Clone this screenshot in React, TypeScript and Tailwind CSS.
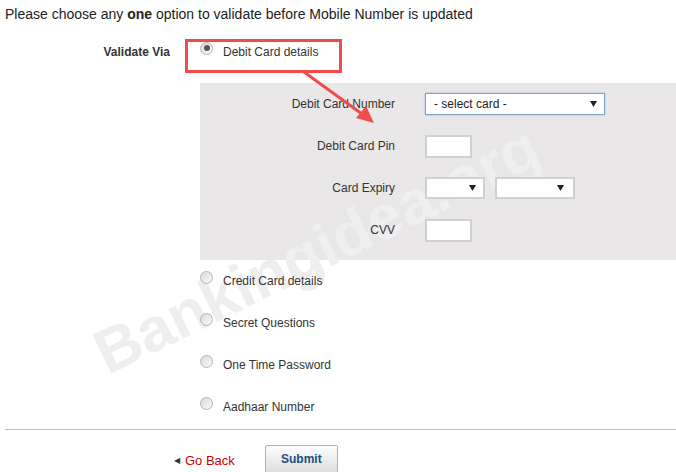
import React from "react";

const Radio = ({ checked = false }: { checked?: boolean }) => (
  <span className="mt-[-8px] flex h-[13px] w-[13px] shrink-0 items-center justify-center rounded-full border border-[#b3b3b3] bg-gradient-to-br from-[#d9d9d9] to-[#fbfbfb]">
    {checked && <span className="h-[6px] w-[6px] rounded-full bg-[#555]" />}
  </span>
);

const Option = ({ label, checked }: { label: string; checked?: boolean }) => (
  <div className="relative flex h-[42px] items-center">
    <Radio checked={checked} />
    <span className="ml-[10px]">{label}</span>
  </div>
);

const Caret = () => (
  <svg width="7" height="6" viewBox="0 0 7 6">
    <polygon points="0,0 7,0 3.5,6" fill="#222" />
  </svg>
);

const FieldRow = ({ label, children }: { label: string; children: React.ReactNode }) => (
  <div className="relative flex h-[42px] items-center">
    <div className="w-[195px] text-right">{label}</div>
    <div className="ml-[30px] flex items-center gap-[10px]">{children}</div>
  </div>
);

const Watermark = ({ className }: { className: string }) => (
  <div
    aria-hidden
    className={`pointer-events-none absolute origin-center -rotate-[26deg] whitespace-nowrap text-[62px] font-bold leading-none ${className}`}
  >
    Bankingidea.org
  </div>
);

export default function App() {
  return (
    <div className="relative h-[472px] w-[676px] overflow-hidden bg-white font-['Liberation_Sans',Arial,sans-serif] text-[12px] text-[#333]">
      <Watermark className="left-[74px] top-[219px] text-[#eeeeee]" />

      <div className="relative">
        {/* Header */}
        <p className="pl-[5px] pt-[6px] text-[14px] leading-[17px] text-[#222]">
          Please choose any <b>one</b> option to validate before Mobile Number is updated
        </p>

        {/* Validate via */}
        <div className="mt-[8px] flex">
          <div className="flex h-[42px] w-[170px] items-center justify-end font-bold">Validate Via</div>
          <div className="ml-[30px] flex-1">
            <Option label="Debit Card details" checked />

            <div className="relative mt-[10px] overflow-hidden bg-[#e9e7e8] pb-[9px]">
              <Watermark className="left-[-126px] top-[136px] text-[#f3f3f3] opacity-70" />
              <FieldRow label="Debit Card Number">
                <div className="flex h-[22px] w-[180px] items-center justify-between border border-[#7da2ce] bg-white pl-[8px] pr-[7px] text-[12px] text-[#222] shadow-[0_0_2px_#9ec0ea]">
                  <span>- select card -</span>
                  <Caret />
                </div>
              </FieldRow>
              <FieldRow label="Debit Card Pin">
                <div className="h-[23px] w-[47px] border-2 border-[#d0d0d0] bg-white" />
              </FieldRow>
              <FieldRow label="Card Expiry">
                <div className="flex h-[22px] w-[60px] items-center justify-end border-2 border-[#d0d0d0] bg-white pr-[7px]">
                  <Caret />
                </div>
                <div className="flex h-[22px] w-[80px] items-center justify-end border-2 border-[#d0d0d0] bg-white pr-[9px]">
                  <Caret />
                </div>
              </FieldRow>
              <FieldRow label="CVV">
                <div className="h-[23px] w-[47px] border-2 border-[#d0d0d0] bg-white" />
              </FieldRow>
            </div>

            <Option label="Credit Card details" />
            <Option label="Secret Questions" />
            <Option label="One Time Password" />
            <Option label="Aadhaar Number" />
          </div>
        </div>

        <div className="ml-[5px] mt-[1px] border-t border-[#bdbdbd]" />

        {/* Actions */}
        <div className="mt-[15px] flex items-start pl-[174px]">
          <a className="mt-[6px] flex items-center text-[13px] text-[#cc0000]">
            <span className="mr-[5px] text-[8px] text-[#333]">◀</span>
            Go Back
          </a>
          <button className="ml-[30px] h-[28px] w-[73px] rounded-[2px] border border-[#b0b0b0] bg-gradient-to-b from-[#fdfdfd] to-[#dedede] text-[12px] font-bold text-[#1f4e7d]">
            Submit
          </button>
        </div>
      </div>

      {/* Annotation box */}
      <div className="pointer-events-none absolute left-[185px] top-[39px] h-[34px] w-[157px] border-[3px] border-[#f24b4b]" />

      {/* Annotation arrow */}
      <svg className="pointer-events-none absolute left-0 top-0" width="676" height="472">
        <line x1="304" y1="72" x2="362" y2="114" stroke="#f24b4b" strokeWidth="3" />
        <polygon points="374,123 356,118 366,106" fill="#f24b4b" />
      </svg>
    </div>
  );
}
